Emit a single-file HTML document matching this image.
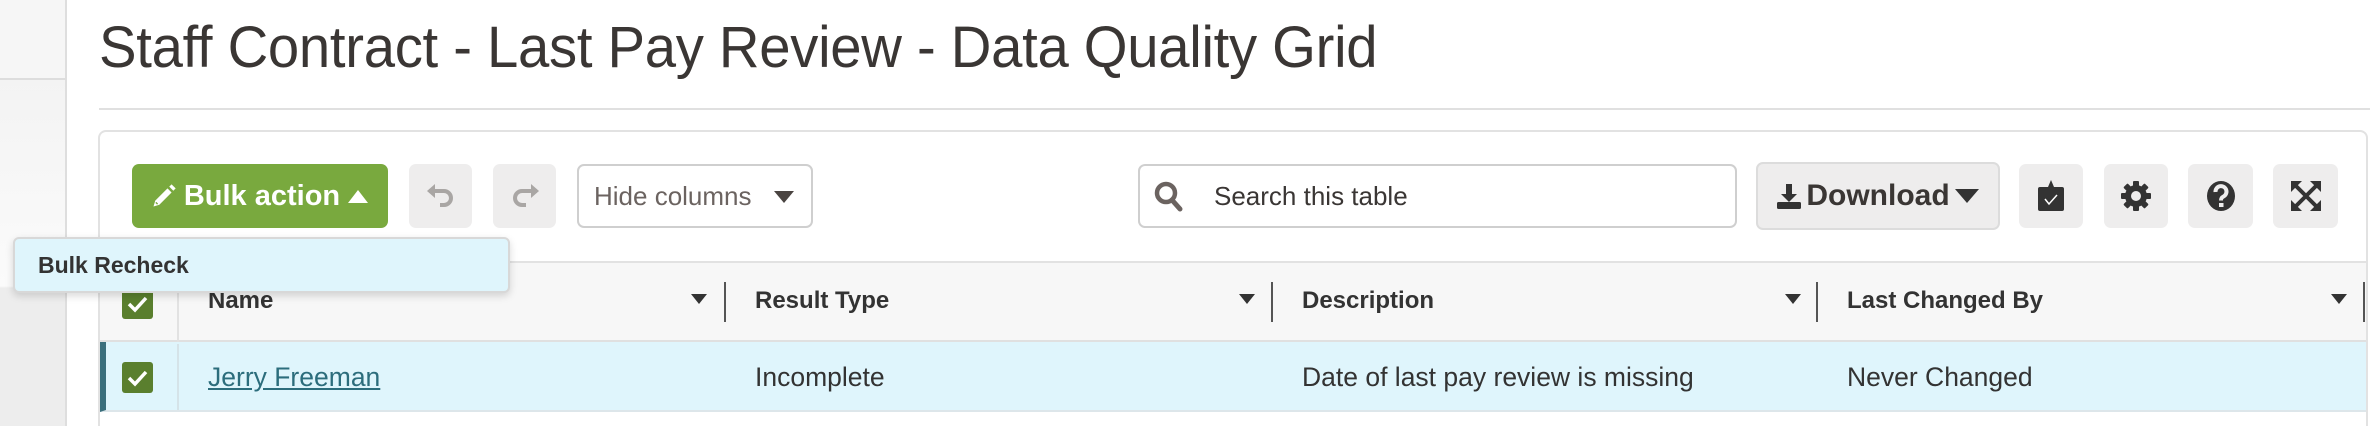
<!DOCTYPE html>
<html><head><meta charset="utf-8">
<style>
*{box-sizing:border-box;margin:0;padding:0}
html{width:2380px;height:426px;overflow:hidden}
body{width:2380px;height:426px;overflow:hidden;background:#fff;font-family:"Liberation Sans",sans-serif;color:#333;position:relative}
.abs{position:absolute}
.side{left:0;top:0;width:67px;height:426px;background:linear-gradient(#f6f6f6 0,#f6f6f6 78px,#f3f3f3 79px,#fbfbfb 286px,#ededed 288px,#ededed 426px);border-right:2px solid #dedede}
.sideline{left:0;top:78px;width:66px;height:2px;background:#ddd}
h1{position:absolute;left:99px;top:14px;font-weight:400;font-size:58px;color:#3a3634;white-space:nowrap;transform:scaleX(0.97);transform-origin:left top;letter-spacing:-0.3px}
.hr{left:99px;top:108px;width:2271px;height:2px;background:#e0e0e0}
.panel{left:98px;top:130px;width:2270px;height:296px;border:2px solid #e2e2e2;border-bottom:none;border-radius:8px 8px 0 0}
.btn{position:absolute;top:164px;height:64px;border-radius:7px;display:flex;align-items:center;justify-content:center}
.bulk{left:132px;width:256px;background:#79a93e;color:#fff;font-weight:700;font-size:29px}
.gray{background:#eeeded}
.hide{left:577px;width:236px;height:64px;top:164px;border:2px solid #cfcfcf;background:#fff;color:#6b6360;font-size:26px;justify-content:flex-start;padding-left:15px}
.search{left:1138px;width:599px;top:164px;height:64px;border:2px solid #cfcfcf;border-radius:7px;background:#fff;color:#3a3634;font-size:26px;justify-content:flex-start;padding-left:74px}
.dl{left:1756px;width:244px;top:162px;height:68px;border:2px solid #dcdcdc;background:#eeeded;color:#3a3634;font-size:30px;font-weight:700}
.thead{left:100px;top:261px;width:2266px;height:81px;background:#f7f7f7;border-top:2px solid #e2e2e2;border-bottom:2px solid #e0e0e0}
.th{position:absolute;top:287px;font-weight:700;font-size:24px;color:#333}
.div{position:absolute;top:282px;width:2px;height:40px;background:#555}
.arr{position:absolute;top:294px;width:0;height:0;border-left:8px solid transparent;border-right:8px solid transparent;border-top:10px solid #333}
.row{left:100px;top:342px;width:2266px;height:70px;background:#dff5fc;border-bottom:2px solid #dde6ea;border-left:6px solid #3a6f7c}
.td{position:absolute;top:362px;font-size:26.5px;color:#333}
.cb{position:absolute;left:122px;width:31px;height:31px;background:#5a7f2e;border-radius:3px}
.menu{left:13px;top:237px;width:497px;height:56px;background:#dff5fc;border:2px solid #d8d8d8;border-radius:6px;box-shadow:0 3px 8px rgba(0,0,0,.15);font-weight:700;font-size:23px;color:#333;padding:13px 0 0 23px}
</style></head><body>
<div class="abs side"></div><div class="abs sideline"></div>
<h1>Staff Contract - Last Pay Review - Data Quality Grid</h1>
<div class="abs hr"></div>
<div class="abs panel"></div>

<div class="btn bulk"><svg width="28" height="28" viewBox="0 0 24 24" style="margin-right:6px"><path d="M3 21l1.5-5L15 5.5l3.5 3.5L8 19.5z M16.5 4l2-2 3.5 3.5-2 2z" fill="#fff"/><path d="M5 17.5l1.5 1.5" stroke="#79a93e" stroke-width="1.2"/></svg>Bulk action<svg width="24" height="18" viewBox="0 0 24 18" style="margin-left:6px"><path d="M2 16L12 3l10 13z" fill="#fff"/></svg></div>
<div class="btn gray" style="left:409px;width:63px"><svg width="32" height="30" viewBox="0 0 32 30"><path d="M4 10h15a7 7 0 0 1 0 14h-4" fill="none" stroke="#a9a6a4" stroke-width="4"/><path d="M2 10l8-7v14z" fill="#a9a6a4"/></svg></div>
<div class="btn gray" style="left:493px;width:63px"><svg width="32" height="30" viewBox="0 0 32 30"><path d="M28 10H13a7 7 0 0 0 0 14h4" fill="none" stroke="#a9a6a4" stroke-width="4"/><path d="M30 10l-8-7v14z" fill="#a9a6a4"/></svg></div>
<div class="btn hide">Hide columns<svg width="22" height="14" viewBox="0 0 22 14" style="position:absolute;left:194px;top:24px"><path d="M1 1h20L11 13z" fill="#4a4441"/></svg></div>
<div class="btn search"><svg width="30" height="32" viewBox="0 0 30 32" style="position:absolute;left:14px;top:15px"><circle cx="12" cy="12" r="9" fill="none" stroke="#6b6360" stroke-width="4.5"/><path d="M18 19l8 9" stroke="#6b6360" stroke-width="5" stroke-linecap="round"/></svg>Search this table</div>
<div class="btn dl"><svg width="26" height="28" viewBox="0 0 26 28" style="margin-right:4px"><path d="M10 2h6v10h5l-8 8-8-8h5z" fill="#333"/><rect x="1" y="20" width="24" height="7" rx="1.5" fill="#333"/></svg>Download<svg width="26" height="18" viewBox="0 0 26 18" style="margin-left:4px"><path d="M1 2h24L13 16z" fill="#333"/></svg></div>
<div class="btn gray" style="left:2019px;width:64px"><svg width="30" height="34" viewBox="0 0 30 34"><rect x="2" y="8" width="26" height="24" rx="2" fill="#333"/><path d="M12 8l3-7 3 7z" fill="#333"/><path d="M9 20l4 5 8-9" fill="none" stroke="#fff" stroke-width="1.5"/></svg></div>
<div class="btn gray" style="left:2104px;width:64px"><svg width="32" height="32" viewBox="0 0 32 32"><g fill="#333"><circle cx="16" cy="16" r="11"/><rect x="13" y="1" width="6" height="30" rx="1"/><rect x="1" y="13" width="30" height="6" rx="1"/><rect x="13" y="1" width="6" height="30" rx="1" transform="rotate(45 16 16)"/><rect x="13" y="1" width="6" height="30" rx="1" transform="rotate(-45 16 16)"/></g><circle cx="16" cy="16" r="5" fill="#eeeded"/></svg></div>
<div class="btn gray" style="left:2188px;width:65px"><svg width="32" height="34" viewBox="0 0 32 34"><ellipse cx="16" cy="17" rx="14" ry="15" fill="#333"/><path d="M10.5 13a5.5 5.5 0 1 1 8 4.5c-2 1-2.5 2-2.5 4" fill="none" stroke="#eeeded" stroke-width="4"/><rect x="14" y="24" width="4.5" height="4" fill="#eeeded"/></svg></div>
<div class="btn gray" style="left:2273px;width:65px"><svg width="34" height="34" viewBox="0 0 34 34"><g stroke="#333" stroke-width="4" fill="none"><path d="M6 6l22 22M28 6L6 28"/></g><g fill="#333"><path d="M2 2h11L2 13z"/><path d="M32 2H21l11 11z"/><path d="M2 32h11L2 21z"/><path d="M32 32H21l11-11z"/></g></svg></div>

<div class="abs thead"></div>
<div class="abs" style="left:177px;top:263px;width:2px;height:147px;background:#e2e2e2"></div>
<div class="cb" style="top:288px"><svg width="31" height="31" viewBox="0 0 31 31"><path d="M7 16l6 6 11-12" fill="none" stroke="#fff" stroke-width="3.5"/></svg></div>
<div class="th" style="left:208px">Name</div>
<div class="arr" style="left:691px"></div><div class="div" style="left:724px"></div>
<div class="th" style="left:755px">Result Type</div>
<div class="arr" style="left:1239px"></div><div class="div" style="left:1271px"></div>
<div class="th" style="left:1302px">Description</div>
<div class="arr" style="left:1785px"></div><div class="div" style="left:1816px"></div>
<div class="th" style="left:1847px">Last Changed By</div>
<div class="arr" style="left:2331px"></div><div class="div" style="left:2363px"></div>

<div class="abs row"></div>
<div class="abs" style="left:177px;top:344px;width:2px;height:66px;background:#d5e3e8"></div>
<div class="cb" style="top:362px"><svg width="31" height="31" viewBox="0 0 31 31"><path d="M7 16l6 6 11-12" fill="none" stroke="#fff" stroke-width="3.5"/></svg></div>
<div class="td" style="left:208px;color:#2c6d7c;text-decoration:underline">Jerry Freeman</div>
<div class="td" style="left:755px">Incomplete</div>
<div class="td" style="left:1302px">Date of last pay review is missing</div>
<div class="td" style="left:1847px">Never Changed</div>

<div class="abs menu">Bulk Recheck</div>
</body></html>
